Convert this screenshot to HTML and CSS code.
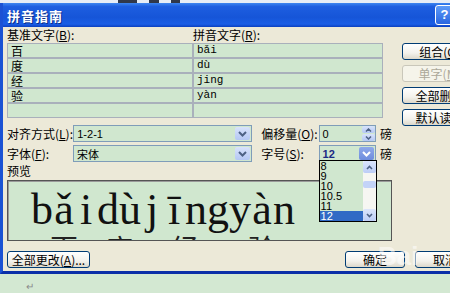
FILE: index.html
```html
<!DOCTYPE html>
<html lang="zh-CN">
<head>
  <meta charset="UTF-8">
  <title>拼音指南</title>
  <link rel="stylesheet" href="styles.css">
</head>
<body>
  <div class="strip">
    <span class="dot d1"></span><span class="dot d2"></span><span class="dot d3"></span>
  </div>

  <div class="dialog">
    <div class="titlebar">
      <span class="title">拼音指南</span>
      <span class="help">?</span>
    </div>

    <div class="client">
      <div class="top">
        <div class="main">
          <div class="heads">
            <span class="head-left">基准文字(<u>B</u>):</span>
            <span>拼音文字(<u>R</u>):</span>
          </div>

          <div class="grid">
            <div class="cell">百</div><div class="cell py">bǎi</div>
            <div class="cell">度</div><div class="cell py">dù</div>
            <div class="cell">经</div><div class="cell py">jing</div>
            <div class="cell">验</div><div class="cell py">yàn</div>
            <div class="cell"></div><div class="cell"></div>
          </div>

          <div class="opts">
            <div class="opt-row">
              <span class="lbl">对齐方式(<u>L</u>):</span>
              <div class="combo wide">
                <span class="val">1-2-1</span>
                <span class="arrow"><svg width="9" height="6" viewBox="0 0 9 6"><path d="M1 1l3.5 3.5L8 1" fill="none" stroke="#4d6185" stroke-width="2"/></svg></span>
              </div>
              <span class="lbl lbl2">偏移量(<u>O</u>):</span>
              <div class="combo small">
                <span class="val">0</span>
                <span class="spin">
                  <span class="spin-btn"><svg width="7" height="4" viewBox="0 0 7 4"><path d="M1 3.5l2.5-2.5L6 3.5" fill="none" stroke="#4d6185" stroke-width="1.5"/></svg></span>
                  <span class="spin-btn"><svg width="7" height="4" viewBox="0 0 7 4"><path d="M1 .5l2.5 2.5L6 .5" fill="none" stroke="#4d6185" stroke-width="1.5"/></svg></span>
                </span>
              </div>
              <span class="unit">磅</span>
            </div>

            <div class="opt-row">
              <span class="lbl">字体(<u>F</u>):</span>
              <div class="combo wide">
                <span class="val">宋体</span>
                <span class="arrow"><svg width="9" height="6" viewBox="0 0 9 6"><path d="M1 1l3.5 3.5L8 1" fill="none" stroke="#4d6185" stroke-width="2"/></svg></span>
              </div>
              <span class="lbl lbl2">字号(<u>S</u>):</span>
              <div class="combo small open">
                <span class="val sel">12</span>
                <span class="arrow pressed"><svg width="9" height="6" viewBox="0 0 9 6"><path d="M1 1l3.5 3.5L8 1" fill="none" stroke="#fff" stroke-width="2"/></svg></span>

                <div class="droplist">
                  <div class="items">
                    <div class="item">8</div>
                    <div class="item">9</div>
                    <div class="item">10</div>
                    <div class="item">10.5</div>
                    <div class="item">11</div>
                    <div class="item current">12</div>
                  </div>
                  <div class="scroll">
                    <span class="sb-btn"><svg width="7" height="5" viewBox="0 0 7 5"><path d="M1 4l2.5-2.5L6 4" fill="none" stroke="#4d6185" stroke-width="1.6"/></svg></span>
                    <span class="sb-track"><span class="sb-thumb"></span></span>
                    <span class="sb-btn"><svg width="7" height="5" viewBox="0 0 7 5"><path d="M1 1l2.5 2.5L6 1" fill="none" stroke="#4d6185" stroke-width="1.6"/></svg></span>
                  </div>
                </div>
              </div>
              <span class="unit">磅</span>
            </div>
          </div>

          <div class="preview-label">预览</div>
          <div class="preview">
            <div class="ruby">
              <div class="pinyin"><span>b</span><span>ǎ</span><span>i</span></div>
              <div class="han">百</div>
            </div>
            <div class="ruby">
              <div class="pinyin"><span>d</span><span>ù</span></div>
              <div class="han">度</div>
            </div>
            <div class="ruby">
              <div class="pinyin"><span>j</span><span>ī</span><span>n</span><span>g</span></div>
              <div class="han">经</div>
            </div>
            <div class="ruby">
              <div class="pinyin"><span>y</span><span>à</span><span>n</span></div>
              <div class="han">验</div>
            </div>
          </div>
        </div>

        <div class="side">
          <button class="btn">组合(<u>G</u>)</button>
          <button class="btn disabled">单字(<u>M</u>)</button>
          <button class="btn">全部删除</button>
          <button class="btn">默认读音</button>
        </div>
      </div>

      <div class="footer">
        <button class="btn btn-all">全部更改(<u>A</u>)...</button>
        <div class="footer-right">
          <button class="btn btn-ok">确定</button>
          <button class="btn btn-ok">取消</button>
        </div>
      </div>
    </div>

    <!-- 水印 -->
    <div class="watermark">Bai</div>
  </div>

  <div class="doc">↵</div>
</body>
</html>
```

FILE: styles.css
```css
body {
  margin: 0;
  width: 450px;
  height: 293px;
  overflow: hidden;
  background: #d3e8d2;
  font-family: "Noto Sans CJK SC", sans-serif;
  font-size: 12px;
  color: #000;
}

u {
  text-decoration: underline;
}

/* 顶部工具栏残留 */
.strip {
  height: 3px;
  background: #e6edf6;
  display: flex;
  padding-left: 118px;
  gap: 12px;
}
.dot {
  height: 3px;
  background: #30384a;
}
.d1 { width: 19px; }
.d2 { width: 10px; }
.d3 { width: 9px; }

/* 对话框 */
.dialog {
  position: relative;
  height: 268px;
  background: #ece9d8;
  border-left: 3px solid #1a52d4;
  border-bottom: 3px solid #0a2fa8;
  overflow: hidden;
}

.titlebar {
  height: 24px;
  display: flex;
  align-items: center;
  justify-content: space-between;
  background: linear-gradient(to bottom, #3d86f0 0%, #1d5ee0 15%, #1655d8 60%, #1a5ee6 88%, #0b3fbf 100%);
  padding-left: 4px;
}
.title {
  color: #fff;
  font-weight: bold;
  font-size: 13px;
  letter-spacing: 1px;
  text-shadow: 1px 1px 0 #0b2f8c;
}
.help {
  width: 17px;
  height: 18px;
  margin-right: -4px;
  border: 1px solid #fff;
  border-radius: 3px;
  background: linear-gradient(to bottom, #5d9bf8, #2a66e0);
  color: #fff;
  font-family: "Liberation Sans", sans-serif;
  font-weight: bold;
  font-size: 13px;
  line-height: 18px;
  text-align: center;
}

.client {
  padding-left: 4px;
}
.top {
  display: flex;
}
.main {
  width: 385px;
}

.heads {
  height: 16px;
  line-height: 16px;
  display: flex;
}
.head-left {
  width: 186px;
}

.grid {
  width: 376px;
  display: grid;
  grid-template-columns: 186px 190px;
  grid-auto-rows: 15px;
}
.cell {
  box-sizing: border-box;
  border: 1px solid #a9b0bb;
  background: #d0e7cf;
  padding-left: 3px;
  line-height: 13px;
}
.cell.py {
  font-family: "Liberation Mono", monospace;
  font-size: 11px;
}

/* 选项 */
.opts {
  margin-top: 7px;
  display: flex;
  flex-direction: column;
  gap: 3px;
}
.opt-row {
  display: flex;
  align-items: center;
  height: 17px;
}
.lbl {
  width: 67px;
  white-space: nowrap;
}
.lbl2 {
  width: 58px;
  margin-left: 9px;
}
.unit {
  margin-left: 4px;
}

.combo {
  position: relative;
  box-sizing: border-box;
  height: 17px;
  border: 1px solid #7f9db9;
  background: #d0e7cf;
  display: flex;
  align-items: center;
  justify-content: space-between;
}
.combo.wide { width: 181px; }
.combo.small { width: 58px; }
.val {
  padding-left: 3px;
  font-family: "Liberation Sans", sans-serif;
  font-size: 11px;
}
.val.sel {
  color: #1b2a84;
  font-weight: bold;
}
.arrow {
  width: 15px;
  height: 13px;
  margin-right: 1px;
  border-radius: 2px;
  background: linear-gradient(to bottom, #d8e3fb, #b4c7f4);
  display: flex;
  align-items: center;
  justify-content: center;
}
.arrow.pressed {
  background: linear-gradient(to bottom, #8fa9ea, #6e8ddd);
}
.spin {
  width: 13px;
  height: 15px;
  display: flex;
  flex-direction: column;
  gap: 1px;
}
.spin-btn {
  flex: 1;
  border-radius: 2px;
  background: linear-gradient(to bottom, #d8e3fb, #b4c7f4);
  display: flex;
  align-items: center;
  justify-content: center;
}

/* 下拉列表 */
.droplist {
  position: absolute;
  left: -1px;
  top: 14px;
  width: 58px;
  height: 62px;
  box-sizing: border-box;
  border: 1px solid #000;
  background: #d0e7cf;
  display: flex;
  z-index: 2;
}
.items {
  flex: 1;
}
.item {
  height: 10px;
  line-height: 10px;
  padding-left: 1px;
  font-family: "Liberation Sans", sans-serif;
  font-size: 11px;
}
.item.current {
  background: #316ac5;
  color: #fff;
}
.scroll {
  width: 13px;
  background: #f6f6f2;
  display: flex;
  flex-direction: column;
}
.sb-btn {
  height: 12px;
  border-radius: 2px;
  background: linear-gradient(to bottom, #dbe5fb, #bccdf6);
  display: flex;
  align-items: center;
  justify-content: center;
}
.sb-track {
  flex: 1;
  padding-top: 8px;
}
.sb-thumb {
  display: block;
  height: 7px;
  border-radius: 2px;
  background: #c3d3f8;
}

/* 预览 */
.preview-label {
  height: 18px;
  line-height: 18px;
}
.preview {
  box-sizing: border-box;
  height: 61px;
  border: 1px solid #555;
  box-shadow: inset 1px 1px 0 #9a9a9a;
  background: #d0e7cf;
  padding: 7px 0 0 23px;
  display: flex;
  overflow: hidden;
}
.ruby {
  display: flex;
  flex-direction: column;
  align-items: center;
}
.pinyin {
  display: flex;
  height: 44px;
  font-family: "Liberation Serif", serif;
  font-size: 44px;
  line-height: 44px;
  color: #111;
}
.pinyin span {
  width: 22px;
  text-align: center;
}
.han {
  font-size: 28px;
  line-height: 30px;
  margin-top: 1px;
  color: #222;
}

/* 按钮 */
.side {
  margin-left: 10px;
  padding-top: 16px;
  display: flex;
  flex-direction: column;
  gap: 5px;
}
.btn {
  box-sizing: border-box;
  width: 75px;
  height: 17px;
  padding: 0;
  border: 1px solid #003c74;
  border-radius: 3px;
  background: linear-gradient(to bottom, #ffffff, #f3f2ec 60%, #dcd8cb);
  font-family: "Noto Sans CJK SC", sans-serif;
  font-size: 12px;
  line-height: 15px;
  color: #000;
  text-align: center;
}
.btn.disabled {
  border-color: #c9c7ba;
  background: #f5f4ea;
  color: #aca899;
}

.footer {
  margin-top: 10px;
  display: flex;
  justify-content: space-between;
}
.btn-all {
  width: 83px;
}
.footer-right {
  display: flex;
  gap: 10px;
  margin-right: -25px;
}
.btn-ok {
  width: 60px;
}

.watermark {
  position: absolute;
  left: 375px;
  top: 238px;
  font-family: "Liberation Sans", sans-serif;
  font-size: 26px;
  font-weight: bold;
  color: rgba(255, 255, 255, 0.55);
  pointer-events: none;
}

.doc {
  padding: 4px 0 0 26px;
  font-size: 10px;
  color: #8a8a8a;
}
```
